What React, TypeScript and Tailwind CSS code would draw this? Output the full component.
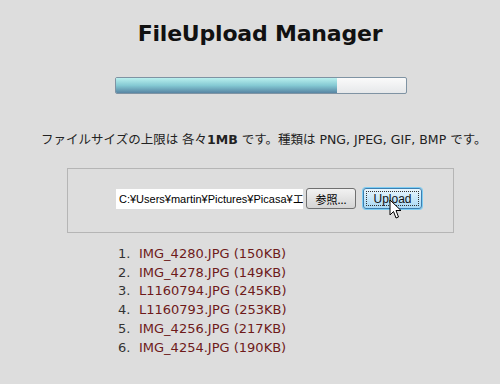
import React from "react";

const files = [
  { name: "IMG_4280.JPG", size: "150KB" },
  { name: "IMG_4278.JPG", size: "149KB" },
  { name: "L1160794.JPG", size: "245KB" },
  { name: "L1160793.JPG", size: "253KB" },
  { name: "IMG_4256.JPG", size: "217KB" },
  { name: "IMG_4254.JPG", size: "190KB" },
];

const font = {
  fontFamily: '"DejaVu Sans", "Noto Sans CJK JP", sans-serif',
};

const Cursor: React.FC = () => (
  <svg width="14" height="22" viewBox="0 0 14 22" className="absolute left-[389px] top-[199px]">
    <path
      d="M1 1 L1 16 L4.5 12.5 L7 19 L9.5 18 L7 11.5 L12 11.5 Z"
      fill="#fff"
      stroke="#000"
      strokeWidth="1"
      strokeLinejoin="round"
    />
  </svg>
);

const App: React.FC = () => {
  return (
    <div className="relative w-[500px] h-[384px] bg-[#dddddd] overflow-hidden" style={font}>
      <div className="flex flex-col">
        <h1 className="pt-[17px] h-[50px] text-center text-[22px] font-bold text-[#111] tracking-[-0.2px] pl-[20px]">
          FileUpload Manager
        </h1>

        <div className="ml-[115px] mt-[27px] w-[292px] h-[17px] border border-[#7f93a3] rounded-[2px] bg-gradient-to-b from-[#fafafa] to-[#e6e8ea] overflow-hidden">
          <div className="h-full w-[221px] bg-gradient-to-b from-[#b9f0ee] via-[#84c9d3] to-[#5885a3]" />
        </div>

        <p className="mt-[37px] ml-[41px] text-[12.5px] text-[#222] whitespace-nowrap">
          ファイルサイズの上限は 各々<b>1MB</b> です。種類は PNG, JPEG, GIF, BMP です。
        </p>

        <div className="mt-[18px] ml-[67px] w-[387px] h-[65px] border border-[#b5b5b5] flex items-center pl-[48px]">
          <div
            className="w-[187px] h-[20px] mb-[3px] bg-white text-[11px] text-black flex items-center pl-[3px] overflow-hidden whitespace-nowrap"
            style={{ fontFamily: '"Liberation Sans", "Noto Sans CJK JP", sans-serif' }}
          >
            C:¥Users¥martin¥Pictures¥Picasa¥エ-
          </div>
          <div
            className="ml-[3px] w-[50px] h-[21px] mb-[3px] rounded-[3px] border border-[#707070] bg-gradient-to-b from-[#f2f2f2] to-[#d4d4d4] flex items-center justify-center text-[11px] text-black"
            style={{ fontFamily: '"Noto Sans CJK JP", sans-serif' }}
          >
            参照...
          </div>
          <div className="ml-[7px] w-[59px] h-[21px] mb-[3px] rounded-[3px] border border-[#3c7fb1] bg-gradient-to-b from-[#eaf6fd] to-[#a7d9f5] p-[2px] shadow-[0_0_0_1px_#7dcdf3]">
            <div
              className="w-full h-full border border-dotted border-[#333] flex items-center justify-center text-[12px] text-[#111]"
              style={{ fontFamily: '"Liberation Sans", sans-serif' }}
            >
              Upload
            </div>
          </div>
        </div>

        <ol className="mt-[12px] ml-[118px] text-[13px] leading-[18.8px]">
          {files.map((f, i) => (
            <li key={f.name} className="flex whitespace-nowrap">
              <span className="w-[21px] text-[#333]">{i + 1}.</span>
              <span className="text-[#6e1a1a]">
                {f.name} ({f.size})
              </span>
            </li>
          ))}
        </ol>
      </div>
      <Cursor />
    </div>
  );
};

export default App;
